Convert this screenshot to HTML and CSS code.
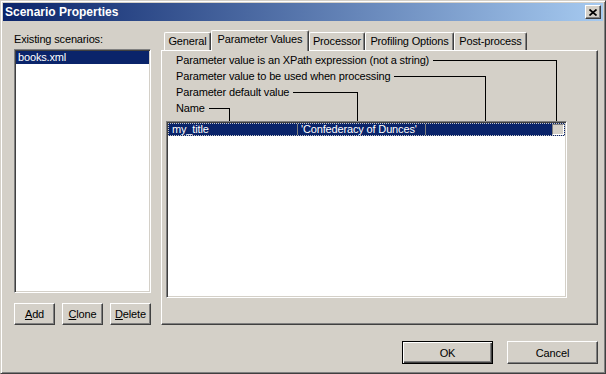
FILE: index.html
```html
<!DOCTYPE html>
<html lang="en">

<head>
    <meta charset="UTF-8">
    <title>Scenario Properties</title>
    <link rel="stylesheet" href="styles.css">
</head>

<body>
    <div class="window">
        <div class="titlebar">
            <span class="title">Scenario Properties</span>
            <span class="close-btn">
                <svg width="8" height="7" viewBox="0 0 8 7">
                    <path d="M0.5 0.5 L7.5 6.5 M7.5 0.5 L0.5 6.5" stroke="#000" stroke-width="1.7" fill="none" />
                </svg>
            </span>
        </div>

        <div class="main">
            <div class="scenarios">
                <div class="label">Existing scenarios:</div>
                <div class="listbox">
                    <div class="list-item selected">books.xml</div>
                </div>
                <div class="list-buttons">
                    <button class="btn"><u>A</u>dd</button>
                    <button class="btn"><u>C</u>lone</button>
                    <button class="btn"><u>D</u>elete</button>
                </div>
            </div>

            <div class="tabs">
                <div class="tab-strip">
                    <div class="tab tab-general">General</div>
                    <div class="tab tab-params active">Parameter Values</div>
                    <div class="tab tab-processor">Processor</div>
                    <div class="tab tab-profiling">Profiling Options</div>
                    <div class="tab tab-post">Post-process</div>
                </div>
                <div class="tab-panel">
                    <div class="legend">
                        <div class="legend-row row-xpath">
                            <span>Parameter value is an XPath expression (not a string)</span>
                            <span class="leader"></span>
                        </div>
                        <div class="legend-row row-value">
                            <span>Parameter value to be used when processing</span>
                            <span class="leader"></span>
                        </div>
                        <div class="legend-row row-default">
                            <span>Parameter default value</span>
                            <span class="leader"></span>
                        </div>
                        <div class="legend-row row-name">
                            <span>Name</span>
                            <span class="leader"></span>
                        </div>
                    </div>
                    <div class="listview">
                        <div class="lv-row">
                            <span class="cell c1">my_title</span>
                            <span class="cell c2">'Confederacy of Dunces'</span>
                            <span class="cell c3"></span>
                            <span class="checkbox"></span>
                        </div>
                    </div>
                </div>
            </div>
        </div>

        <div class="footer">
            <button class="btn btn-wide btn-default">OK</button>
            <button class="btn btn-wide">Cancel</button>
        </div>
    </div>
</body>

</html>
```

FILE: styles.css
```css
* {
    margin: 0;
    padding: 0;
    box-sizing: border-box;
}

body {
    font-family: "Liberation Sans", Arial, sans-serif;
    font-size: 11px;
    letter-spacing: -0.15px;
    color: #000;
    background: #d4d0c8;
}

.window {
    width: 606px;
    height: 374px;
    background: #d4d0c8;
    border: 1px solid;
    border-color: #d4d0c8 #404040 #404040 #d4d0c8;
    box-shadow: inset 1px 1px #fff, inset -1px -1px #808080;
    padding: 2px;
    display: flex;
    flex-direction: column;
}

/* title bar */
.titlebar {
    height: 18px;
    display: flex;
    align-items: center;
    justify-content: space-between;
    padding: 0 2px;
    background: linear-gradient(to right, #0a246a, #a6caf0);
}

.title {
    color: #fff;
    font-weight: bold;
    font-size: 12px;
    letter-spacing: 0;
}

.close-btn {
    width: 16px;
    height: 14px;
    display: flex;
    align-items: center;
    justify-content: center;
    background: #d4d0c8;
    border: 1px solid;
    border-color: #fff #404040 #404040 #fff;
    box-shadow: inset -1px -1px #808080;
}

.close-btn svg {
    display: block;
}

/* main area */
.main {
    display: flex;
    gap: 10px;
    padding: 9px 0 0 11px;
}

.scenarios {
    width: 137px;
    display: flex;
    flex-direction: column;
}

.label {
    height: 19px;
    padding-top: 3px;
    line-height: 13px;
}

.listbox {
    height: 244px;
    background: #fff;
    border: 1px solid;
    border-color: #808080 #fff #fff #808080;
    box-shadow: inset 1px 1px #404040, inset -1px -1px #d4d0c8;
    padding: 1px;
}

.list-item {
    height: 13px;
    line-height: 13px;
    padding-left: 2px;
}

.selected {
    background: #0a246a;
    color: #fff;
}

.list-buttons {
    display: flex;
    gap: 7px;
    margin-top: 10px;
}

.btn {
    font: inherit;
    letter-spacing: inherit;
    color: #000;
    width: 41px;
    height: 22px;
    background: #d4d0c8;
    border: 1px solid;
    border-color: #fff #404040 #404040 #fff;
    box-shadow: inset -1px -1px #808080;
}

.btn u {
    text-decoration: underline;
}

/* tabs */
.tabs {
    width: 437px;
    display: flex;
    flex-direction: column;
}

.tab-strip {
    height: 20px;
    display: flex;
    align-items: flex-end;
    padding-left: 3px;
}

.tab {
    height: 18px;
    line-height: 16px;
    text-align: center;
    flex-shrink: 0;
    background: #d4d0c8;
    border-top: 1px solid #fff;
    border-left: 1px solid #fff;
    border-right: 1px solid #404040;
    border-radius: 2px 2px 0 0;
    box-shadow: inset -1px 0 #808080;
}

.tab.active {
    height: 21px;
    margin-bottom: -1px;
    line-height: 17px;
    position: relative;
    z-index: 1;
}

.tab-general { width: 47px; }
.tab-params { width: 98px; }
.tab-processor { width: 56px; }
.tab-profiling { width: 89px; }
.tab-post { width: 73px; }

.tab-panel {
    height: 275px;
    border: 1px solid;
    border-color: #fff #404040 #404040 #fff;
    box-shadow: inset -1px -1px #808080;
    padding: 1px 0 0 4px;
}

/* legend with leader lines */
.legend {
    padding-left: 10px;
}

.legend-row {
    display: flex;
    height: 16px;
    line-height: 16px;
    white-space: nowrap;
}

.leader {
    flex: 1;
    align-self: flex-start;
    margin-left: 4px;
    margin-top: 8px;
    border-top: 1px solid #000;
    border-right: 1px solid #000;
}

.row-xpath { width: 381px; }
.row-value { width: 310px; }
.row-default { width: 182px; }
.row-name { width: 54px; }

.row-xpath .leader { height: 61px; }
.row-value .leader { height: 45px; }
.row-default .leader { height: 29px; }
.row-name .leader { height: 13px; }

/* list view */
.listview {
    margin-top: 5px;
    width: 401px;
    height: 177px;
    background: #fff;
    border: 1px solid;
    border-color: #808080 #fff #fff #808080;
    box-shadow: inset 1px 1px #404040, inset -1px -1px #d4d0c8;
    padding: 1px;
}

.lv-row {
    display: flex;
    height: 13px;
    background: #0a246a;
    color: #fff;
    border: 1px dotted #c8c8c8;
}

.cell {
    line-height: 11px;
    padding-left: 3px;
    white-space: nowrap;
    overflow: hidden;
    border-right: 1px solid #808080;
}

.c1 { width: 129px; }
.c2 { width: 128px; }

.c3 {
    flex: 1;
    border-right: none;
}

.checkbox {
    width: 12px;
    height: 11px;
    background: #d4d0c8;
    border: 1px solid;
    border-color: #808080 #fff #fff #808080;
}

/* dialog buttons */
.footer {
    display: flex;
    justify-content: flex-end;
    gap: 14px;
    margin-top: 16px;
    padding-right: 5px;
}

.btn-wide {
    width: 91px;
    height: 23px;
}

.btn-default {
    border-color: #000;
    box-shadow: inset 1px 1px #fff, inset -1px -1px #404040, inset -2px -2px #808080;
}
```
